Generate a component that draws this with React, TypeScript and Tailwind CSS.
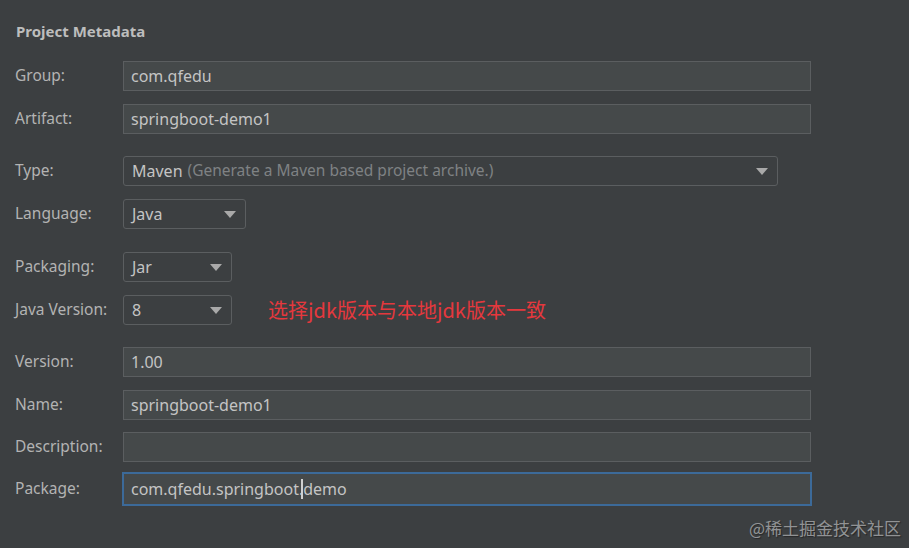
import React from "react";

const font = { fontFamily: '"Noto Sans", "Open Sans", "Noto Sans CJK SC", sans-serif' };

function Arrow() {
  return (
    <svg width="12" height="7" viewBox="0 0 12 7" className="shrink-0">
      <path d="M0 0 L12 0 L6 7 Z" fill="#a9a9a9" />
    </svg>
  );
}

function TextField({ value, focused, children }: { value?: string; focused?: boolean; children?: React.ReactNode }) {
  return (
    <div
      className={
        focused
          ? "ml-[-1px] h-[34px] w-[690px] border-2 border-[#3c6a99] bg-[#45494a] px-[7px] flex items-center text-[16px] text-[#c4c4c4]"
          : "h-[30px] w-[688px] border border-[#5b5e60] bg-[#45494a] px-[7px] flex items-center text-[16px] text-[#c4c4c4]"
      }
    >
      {children ?? value}
    </div>
  );
}

function Combo({ width, children }: { width: string; children: React.ReactNode }) {
  return (
    <div
      className={`${width} h-[30px] rounded-[3px] border border-[#5b5e60] bg-[#3c3f41] pl-[8px] pr-[9px] flex items-center justify-between text-[16px] text-[#c4c4c4]`}
    >
      <div className="flex items-center">{children}</div>
      <Arrow />
    </div>
  );
}

function Row({ label, mt, children }: { label: string; mt: string; children: React.ReactNode }) {
  return (
    <div className={`flex items-center ${mt}`}>
      <div className="w-[108px] text-[15.5px] text-[#b3b3b3]">{label}</div>
      {children}
    </div>
  );
}

export default function App() {
  return (
    <div className="relative w-[909px] h-[548px] bg-[#3c3f41] pl-[15px] pt-[20px] overflow-hidden" style={font}>
      <div className="text-[15px] font-bold text-[#bdbdbd] leading-[22px] pl-[1px]">Project Metadata</div>
      <Row label="Group:" mt="mt-[19px]">
        <TextField value="com.qfedu" />
      </Row>
      <Row label="Artifact:" mt="mt-[13px]">
        <TextField value="springboot-demo1" />
      </Row>
      <Row label="Type:" mt="mt-[22px]">
        <Combo width="w-[655px]">
          <span>Maven</span>
          <span className="ml-[5px] text-[15.5px] text-[#7f8284]">(Generate a Maven based project archive.)</span>
        </Combo>
      </Row>
      <Row label="Language:" mt="mt-[13px]">
        <Combo width="w-[123px]">Java</Combo>
      </Row>
      <Row label="Packaging:" mt="mt-[23px]">
        <Combo width="w-[109px]">Jar</Combo>
      </Row>
      <Row label="Java Version:" mt="mt-[13px]">
        <Combo width="w-[109px]">8</Combo>
        <div
          className="ml-[36px] text-[20px] text-[#e5383d]"
          style={{ fontFamily: '"Noto Sans CJK SC", "Noto Sans", sans-serif' }}
        >
          选择jdk版本与本地jdk版本一致
        </div>
      </Row>
      <Row label="Version:" mt="mt-[22px]">
        <TextField value="1.00" />
      </Row>
      <Row label="Name:" mt="mt-[13px]">
        <TextField value="springboot-demo1" />
      </Row>
      <Row label="Description:" mt="mt-[12px]">
        <TextField value="" />
      </Row>
      <Row label="Package:" mt="mt-[10px]">
        <TextField focused>
          <span>com.qfedu.springboot.</span>
          <span className="inline-block w-[2px] h-[20px] bg-[#d0d0d0] ml-[-2px]" />
          <span>demo</span>
        </TextField>
      </Row>
      <div
        className="absolute right-[8px] bottom-[8px] text-[17px] text-[#a7a9aa] opacity-80"
        style={{ fontFamily: '"Noto Sans CJK SC", sans-serif', textShadow: "1px 1px 1px #222" }}
      >
        @稀土掘金技术社区
      </div>
    </div>
  );
}
